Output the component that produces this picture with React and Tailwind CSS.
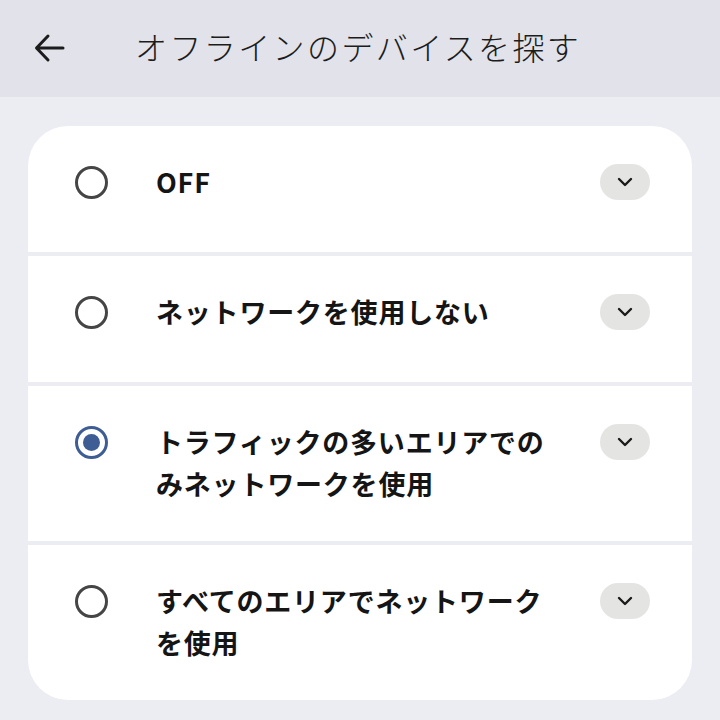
import React from 'react';

const options = [
  { label: 'OFF', selected: false },
  { label: 'ネットワークを使用しない', selected: false },
  { label: 'トラフィックの多いエリアでのみネットワークを使用', selected: true },
  { label: 'すべてのエリアでネットワークを使用', selected: false },
];

const Radio = ({ selected }) => (
  <div className="w-[42px] h-[42px] flex items-center justify-center shrink-0">
    {selected ? (
      <div className="w-[33px] h-[33px] rounded-full border-[3px] border-[#3d5d94] flex items-center justify-center">
        <div className="w-[17px] h-[17px] rounded-full bg-[#3d5d94]" />
      </div>
    ) : (
      <div className="w-[33px] h-[33px] rounded-full border-[3px] border-[#454545]" />
    )}
  </div>
);

const Chevron = () => (
  <div className="w-[50px] h-[36px] rounded-full bg-[#e4e5e3] flex items-center justify-center shrink-0 mt-[3px]">
    <svg width="16" height="10" viewBox="0 0 16 10" fill="none">
      <path d="M2 2l6 6 6-6" stroke="#1a1a1a" strokeWidth="2.4" strokeLinecap="round" strokeLinejoin="round" />
    </svg>
  </div>
);

const OptionRow = ({ label, selected }) => (
  <div className="bg-white min-h-[126px] pt-[35px] pb-[36px] pl-[42px] pr-[42px] flex items-start">
    <Radio selected={selected} />
    <div className="ml-[44px] w-[412px] text-[27px] leading-[42px] font-bold tracking-[0.8px] text-[#151515]">
      {label}
    </div>
    <div className="flex-1" />
    <Chevron />
  </div>
);

export default function App() {
  return (
    <div
      className="w-[720px] h-[720px] bg-[#ecedf3] flex flex-col overflow-hidden"
      style={{ fontFamily: '"Noto Sans CJK JP", "Noto Sans", sans-serif' }}
    >
      <div className="h-[97px] bg-[#e1e2ea] flex items-center shrink-0">
        <div className="w-[135px] flex items-center pl-[34px] -mt-[1px]">
          <svg width="32" height="30" viewBox="0 0 32 30" fill="none">
            <path d="M29 15H3M14 3L2.5 15 14 27" stroke="#1c1c1c" strokeWidth="3" strokeLinecap="round" strokeLinejoin="round" />
          </svg>
        </div>
        <div className="text-[32px] font-light tracking-[2.4px] text-[#1c1c1c] -mt-[5px]">
          オフラインのデバイスを探す
        </div>
      </div>
      <div className="px-[28px] pt-[29px]">
        <div className="rounded-[40px] overflow-hidden flex flex-col gap-[4px]">
          {options.map((o) => (
            <OptionRow key={o.label} label={o.label} selected={o.selected} />
          ))}
        </div>
      </div>
    </div>
  );
}
